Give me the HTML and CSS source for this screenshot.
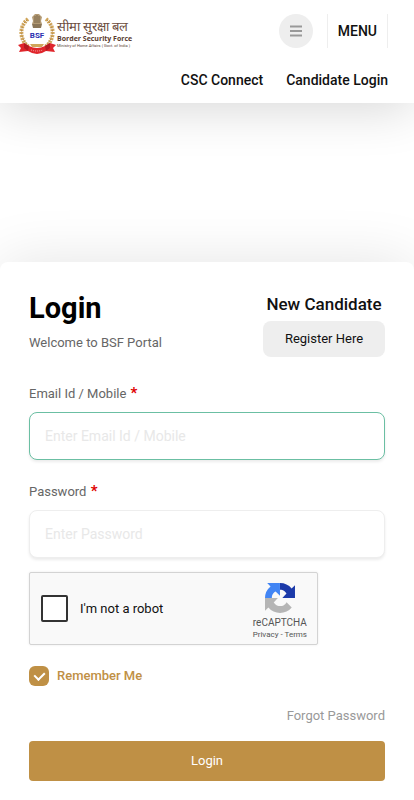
FILE: index.html
```html
<!DOCTYPE html>
<html lang="en">
<head>
    <meta charset="UTF-8">
    <meta name="viewport" content="width=device-width, initial-scale=1.0">
    <title>BSF Portal - Login</title>
    <link rel="stylesheet" href="styles.css">
</head>
<body>
    <header class="header">
        <div class="topbar">
            <a href="#" class="brand">
                <svg class="emblem" viewBox="0 0 38 42" width="38" height="42" aria-hidden="true">
                    <g fill="none" stroke="#d0a55a" stroke-width="4" stroke-dasharray="2 1">
                        <path d="M10 6 C1 13 1 27 11 34"/>
                        <path d="M28 6 C37 13 37 27 27 34"/>
                    </g>
                    <g fill="none" stroke="#a0702f" stroke-width="1" stroke-dasharray="1 2">
                        <path d="M9 7 C1 14 2 27 11 33"/>
                        <path d="M29 7 C37 14 36 27 27 33"/>
                    </g>
                    <path d="M17 1 H21 L24 4 L23 8 L24 11 H14 L15 8 L14 4 Z" fill="#b39a74"/>
                    <path d="M17 3 V10 M19 2 V10 M21 3 V10" stroke="#7d684a" stroke-width="1"/>
                    <path d="M12 31 H26 L24 34 H14 Z" fill="#d0a55a"/>
                    <circle cx="19" cy="22" r="9" fill="#fff"/>
                    <path d="M14 11 H24 L23 15 H15 Z" fill="#8b7658"/>
                    <path d="M0 32 L6 30 L11 33 Q19 37 27 33 L32 30 L38 32 L35 35 L37 39 L28 38 Q19 44 10 38 L1 39 L3 35 Z" fill="#e0262c"/>
                    <path d="M6 30 L11 33 L10 38 L6 35 Z M32 30 L27 33 L28 38 L32 35 Z" fill="#b51a22"/>
                    <path d="M13 37 Q19 39 25 37" fill="none" stroke="#f3b5ae" stroke-width="1" stroke-dasharray="1 1"/>
                    <text x="19" y="25" text-anchor="middle" class="emblem-text">BSF</text>
                </svg>
                <span class="brand-text">
                    <span class="brand-hindi" lang="hi">सीमा सुरक्षा बल</span>
                    <span class="brand-name">Border Security Force</span>
                    <span class="brand-sub">Ministry of Home Affairs ( Govt. of India )</span>
                </span>
            </a>
            <div class="menu">
                <button type="button" class="menu-toggle" aria-label="Toggle menu">
                    <svg viewBox="0 0 12 12" width="12" height="12" aria-hidden="true">
                        <path d="M0 1.5 H12 M0 6 H12 M0 10.5 H12" stroke="#999" stroke-width="2"/>
                    </svg>
                </button>
                <button type="button" class="menu-label">MENU</button>
            </div>
        </div>
        <nav class="links">
            <a href="#">CSC Connect</a>
            <a href="#">Candidate Login</a>
        </nav>
    </header>

    <main class="card">
        <div class="card-head">
            <div>
                <h1>Login</h1>
                <p class="welcome">Welcome to BSF Portal</p>
            </div>
            <div class="new-candidate">
                <h2>New Candidate</h2>
                <button type="button" class="register">Register Here</button>
            </div>
        </div>

        <form>
            <div class="field">
                <label for="email">Email Id / Mobile <span class="required">*</span></label>
                <input type="text" id="email" class="active" placeholder="Enter Email Id / Mobile">
            </div>
            <div class="field">
                <label for="password">Password <span class="required">*</span></label>
                <input type="password" id="password" placeholder="Enter Password">
            </div>

            <div class="captcha">
                <input type="checkbox" id="robot">
                <label for="robot">I'm not a robot</label>
                <div class="captcha-brand">
                    <svg viewBox="0 0 64 64" width="30" height="30" aria-hidden="true">
                        <path d="M64 31.955 A31 31 0 0 0 63.96 30.58 V4.638 L56.788 11.81 A31.95 31.95 0 0 0 32 0 V14.6 C36 14.6 38 15.3 40 16.4 C42.5 17.8 44.4 19.6 45.8 22.6 L37 31.955 Z" fill="#1c3aa9"/>
                        <path d="M31.862 0 A31 31 0 0 0 30.58 .04 H4.638 L11.81 7.212 A31.95 31.95 0 0 0 0 32 H14.6 C14.6 28 15.3 26 16.4 24 C17.8 21.5 19.6 19.6 22.6 18.2 L32 27 Z" fill="#4285f4"/>
                        <path d="M0 32 A31 31 0 0 0 .04 33.4 V59.3 L7.2 52.1 A31.95 31.95 0 0 0 57 52 L46 41 C44.4 44 42 46.4 39.4 47.8 C34 50.4 25 50.4 18.6 41.4 L27.4 32 Z" fill="#b5b5b5"/>
                    </svg>
                    <span class="captcha-name">reCAPTCHA</span>
                    <span class="captcha-links"><a href="#">Privacy</a> - <a href="#">Terms</a></span>
                </div>
            </div>

            <div class="remember">
                <input type="checkbox" id="remember" checked>
                <label for="remember">Remember Me</label>
            </div>

            <a href="#" class="forgot">Forgot Password</a>
            <button type="submit" class="submit">Login</button>
        </form>
    </main>
</body>
</html>
```

FILE: styles.css
```css
* {
    box-sizing: border-box;
}

body {
    margin: 0;
    background: #fff;
    color: #111;
    font-family: Roboto, "Liberation Sans", sans-serif;
    font-size: 13px;
    line-height: 20px;
    overflow-x: hidden;
}

a {
    color: inherit;
    text-decoration: none;
}

button,
input {
    font: inherit;
}

button {
    border: none;
    padding: 0;
    color: inherit;
    cursor: pointer;
}

h1,
h2,
p {
    margin: 0;
}

/* header */
.header {
    background: #fff;
    padding: 13px 26px 13px 18px;
    box-shadow: 0 6px 50px rgba(0, 0, 0, 0.16);
}

.topbar {
    display: flex;
    justify-content: space-between;
    align-items: flex-start;
}

.brand {
    display: flex;
    align-items: center;
    gap: 1px;
}

.emblem-text {
    font-size: 8px;
    font-weight: bold;
    fill: #2a2fb0;
}

.brand-text {
    display: flex;
    flex-direction: column;
    white-space: nowrap;
}

.brand-hindi {
    color: #6b4c3c;
    font-size: 13px;
    font-weight: 500;
    line-height: 16px;
}

.brand-name {
    color: #5a3c30;
    font-family: "Open Sans", sans-serif;
    font-size: 7px;
    font-weight: bold;
    line-height: 8px;
}

.brand-sub {
    color: #5a3c30;
    font-size: 4px;
    line-height: 6px;
}

.menu {
    display: flex;
    align-items: center;
    gap: 14px;
    padding-top: 1px;
}

.menu-toggle {
    display: flex;
    align-items: center;
    justify-content: center;
    width: 34px;
    height: 34px;
    border-radius: 50%;
    background: #eee;
}

.menu-label {
    height: 34px;
    padding: 0 10px;
    border: 1px solid #eee;
    border-width: 0 1px;
    background: none;
    font-size: 14px;
    font-weight: 500;
}

.links {
    display: flex;
    justify-content: flex-end;
    gap: 23px;
    padding-top: 15px;
    font-size: 14px;
    font-weight: 500;
}

/* login card */
.card {
    margin-top: 159px;
    padding: 28px 29px 40px;
    border-radius: 8px;
    background: #fff;
    box-shadow: 0 0 60px rgba(0, 0, 0, 0.11);
}

.card-head {
    display: flex;
    justify-content: space-between;
    margin-bottom: 27px;
}

h1 {
    font-size: 29px;
    line-height: 36px;
    color: #000;
}

.welcome {
    padding-top: 7px;
    color: #666;
}

.new-candidate {
    text-align: center;
}

h2 {
    font-size: 17px;
    font-weight: 500;
    line-height: 28px;
}

.register {
    width: 122px;
    height: 36px;
    margin-top: 3px;
    border-radius: 8px;
    background: #eee;
}

.field {
    margin-bottom: 22px;
}

.field label {
    display: block;
    margin-bottom: 8px;
    color: #666;
}

.required {
    padding-left: 1px;
    color: #e00000;
    font-size: 15px;
    font-weight: bold;
    line-height: 1;
}

.field input {
    display: block;
    width: 100%;
    height: 48px;
    padding: 0 15px;
    border: 1px solid #eee;
    border-radius: 8px;
    background: #fff;
    box-shadow: 0 2px 3px rgba(0, 0, 0, 0.08);
    font-size: 14px;
    outline: none;
}

.field input.active {
    border-color: #6bbfa3;
}

.field input::placeholder {
    color: #e8e8e8;
}

.captcha {
    display: flex;
    align-items: center;
    max-width: 289px;
    height: 73px;
    margin-top: -8px;
    padding: 0 10px 0 11px;
    border: 1px solid #d3d3d3;
    border-radius: 2px;
    background: #f9f9f9;
    box-shadow: 0 0 3px rgba(0, 0, 0, 0.08);
}

.captcha input {
    appearance: none;
    width: 27px;
    height: 27px;
    margin: 0 12px 0 0;
    border: 2px solid #333;
    border-radius: 2px;
    background: #fff;
}

.captcha-brand {
    display: flex;
    flex-direction: column;
    align-items: center;
    margin-left: auto;
    padding-top: 5px;
    color: #555;
}

.captcha-name {
    padding-top: 3px;
    font-size: 10px;
    line-height: 14px;
}

.captcha-links {
    font-size: 8px;
    line-height: 10px;
}

.remember {
    display: flex;
    align-items: center;
    gap: 8px;
    margin: 21px 0 20px;
    color: #bf9045;
    font-weight: 500;
}

.remember input {
    appearance: none;
    width: 20px;
    height: 20px;
    margin: 0;
    border-radius: 6px;
    background: #bf9045;
    display: grid;
    place-items: center;
}

.remember input:checked::after {
    content: "";
    width: 5px;
    height: 8px;
    margin-bottom: 2px;
    border: solid #fff;
    border-width: 0 2px 2px 0;
    transform: rotate(45deg);
}

.forgot {
    display: block;
    color: #999;
    text-align: right;
}

.submit {
    display: block;
    width: 100%;
    height: 40px;
    margin-top: 15px;
    border-radius: 4px;
    background: #bf9045;
    color: #fff;
}
```
